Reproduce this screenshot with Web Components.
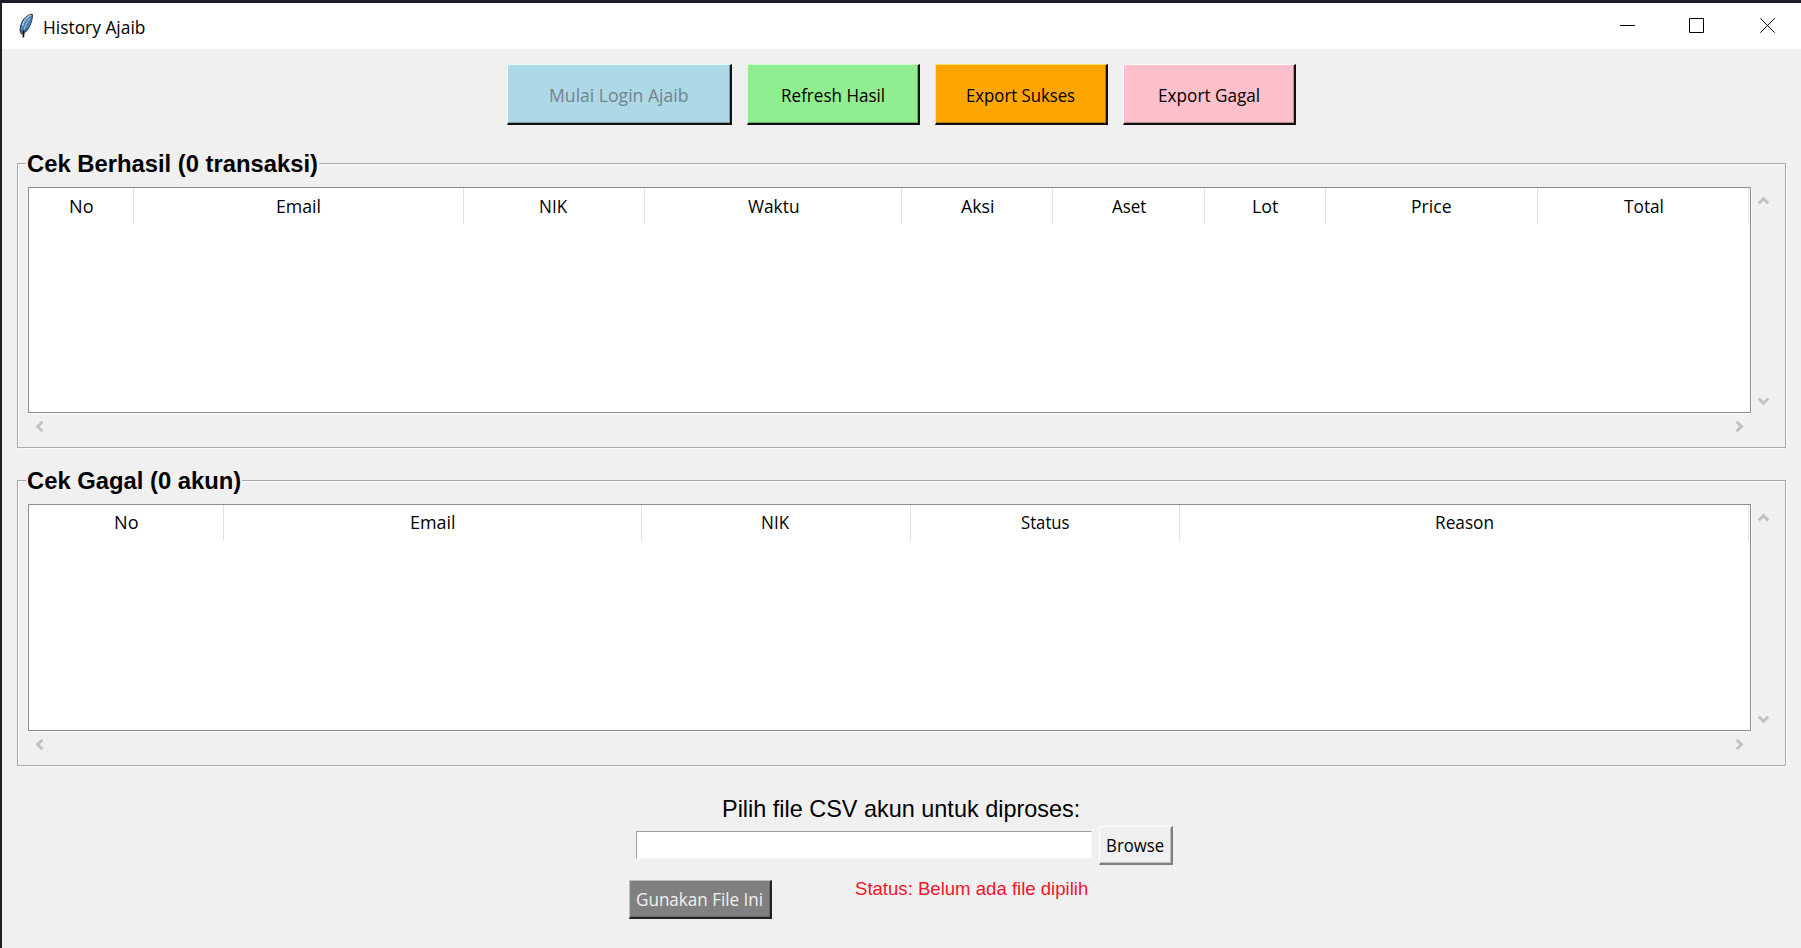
<!DOCTYPE html>
<html lang="id">
<head>
<meta charset="utf-8">
<title>History Ajaib</title>
<style>
html,body{margin:0;height:100%;overflow:hidden}
body{background:#1f1e26;font-family:"Open Sans","Noto Sans",sans-serif;font-size:18px;color:#000}
</style>
</head>
<body>
<history-app></history-app>
<script>
const define = (name, html, setup) => {
  const template = document.createElement('template');
  template.innerHTML = html;
  customElements.define(name, class extends HTMLElement {
    connectedCallback() {
      if (this.shadowRoot) return;
      this.attachShadow({ mode: 'open' }).append(template.content.cloneNode(true));
      if (setup) setup(this, this.shadowRoot);
    }
  });
};

/* Text run condensed to a given ink width */
const pen = document.createElement('canvas').getContext('2d');
define('fit-text', `
<style>
:host{display:flex;flex:none;height:24px;line-height:24px}
span{display:block;flex:none;white-space:nowrap;transform-origin:0 50%}
</style><span><slot></slot></span>`, (el, root) => {
  const w = parseFloat(el.getAttribute('w'));
  const cs = getComputedStyle(el);
  pen.font = `${cs.fontWeight} ${cs.fontSize} ${cs.fontFamily}`;
  const m = pen.measureText(el.textContent);
  const k = w / (m.actualBoundingBoxRight + m.actualBoundingBoxLeft);
  el.style.width = w + 'px';
  root.querySelector('span').style.transform = `translateX(${m.actualBoundingBoxLeft * k}px) scaleX(${k})`;
});

define('title-bar', `
<style>
:host{display:flex;height:46px;background:#fff;align-items:center;box-sizing:border-box;padding-left:16px;font-size:17.500px}
.feather{width:16px;height:26px;margin:0 9.7px 0 0;flex:none}
fit-text{margin-top:1px}
.buttons{display:flex;margin-left:auto;padding:0 26px 0 0}
.buttons svg{width:15px;height:15px;display:block;margin-top:-1px}
.buttons svg:nth-child(2){margin:-1px 56px 0 54px}
</style>
<svg class="feather" viewBox="0 0 16 26">
<path d="M14.3 1.2 C10 1 5 5.500 3.200 11 C1.800 15 2 19 3.300 21 C6 21 9.500 18 11.500 13.500 C13.500 9.500 14.800 5 14.300 1.200Z" fill="#4c80b8" stroke="#30353c" stroke-width="1"/>
<path d="M13 2.200 C9 3 5.500 8 4.500 13" fill="none" stroke="#a9bfd2" stroke-width="1.500"/>
<path d="M11.800 5 C8.500 9.500 6.500 14 5.600 19" fill="none" stroke="#9cc5ea" stroke-width="1"/>
<path d="M1.700 16.500 L3.500 19 M9.500 16 L7.300 17" stroke="#333" fill="none" stroke-width="1"/>
<path d="M5.800 17 L5.300 24.500" stroke="#111" stroke-width="1.700" fill="none"/>
</svg>
<fit-text w="100.700">History Ajaib</fit-text>
<div class="buttons">
<svg viewBox="0 0 15 15"><path d="M0 7.500H15" stroke="#000"/></svg>
<svg viewBox="0 0 15 15"><path d="M.5 .5H14.500V14.500H.5Z" stroke="#000" fill="none"/></svg>
<svg viewBox="0 0 15 15"><path d="M.3 .3L14.700 14.700M14.700 .3L.3 14.700" stroke="#000"/></svg>
</div>`);

/* Raised classic button */
define('tk-button', `
<style>
:host{display:flex;box-sizing:border-box;align-items:center;justify-content:center;flex:none;
background:var(--face);color:var(--ink,#000);border:solid;border-width:1px 2px 2px 1px;
border-color:var(--light) var(--dark,#111) var(--dark,#111) var(--light);
box-shadow:inset -1px -1px var(--shade)}
::slotted(fit-text){margin-top:var(--drop,2px)}
</style><slot></slot>`);

define('scroll-arrow', `
<style>
:host{display:block;width:11px;height:9px;flex:none}
:host([dir=down]){transform:rotate(180deg)}
:host([dir=left]){transform:rotate(-90deg)}
:host([dir=right]){transform:rotate(90deg)}
svg{display:block}
</style><svg width="11" height="9" viewBox="0 0 11 9"><path d="M.8 7.400L5.500 2.500L10.200 7.400" fill="none" stroke="#c1c1c1" stroke-width="2.900"/></svg>`);

define('data-grid', `
<style>
:host{display:grid;grid-template:var(--h) 19px / 1723px 25px}
.view{box-sizing:border-box;background:#fff;border:1px solid #8c8e94;box-shadow:0 1px #fafafa,1px 0 #f8f8f8}
.head{display:flex;height:36px}
.head div{box-sizing:border-box;border-right:1px solid #e2e2e2;display:flex;justify-content:center;flex:none;padding-top:var(--top,6px)}
.v{display:flex;flex-direction:column;justify-content:space-between;align-items:center;padding:9px 0 7px}
.h{display:flex;justify-content:space-between;align-items:center;padding:7px 6px 0}
</style>
<div class="view"><div class="head"></div></div>
<div class="v"><scroll-arrow dir="up"></scroll-arrow><scroll-arrow dir="down"></scroll-arrow></div>
<div class="h"><scroll-arrow dir="left"></scroll-arrow><scroll-arrow dir="right"></scroll-arrow></div>`, (el, root) => {
  const head = root.querySelector('.head');
  for (const col of el.getAttribute('columns').split(',')) {
    const [label, width, ink] = col.split(':');
    const cell = document.createElement('div');
    cell.style.width = width + 'px';
    cell.innerHTML = `<fit-text w="${ink}">${label}</fit-text>`;
    head.append(cell);
  }
});

define('label-frame', `
<style>
:host{display:block;box-sizing:border-box;width:1769px;border:1px solid #a8a8a8;box-shadow:1px 1px #fafafa,inset 1px 1px #fafafa;padding-left:10px}
.legend{display:flex;width:max-content;height:24px;margin:-12px 0 11px -2px;padding:0 2px 0 1px;background:#f0f0f0;font:bold 24px "Liberation Sans",Arial,sans-serif}
</style>
<div class="legend"><slot name="legend"></slot></div><slot></slot>`);

define('file-picker', `
<style>
:host{display:flex;flex-direction:column;align-items:flex-start;width:546px;font-family:"Liberation Sans",Arial,sans-serif}
.prompt{font-size:24px;margin-left:93.500px}
.row{display:flex;align-items:flex-start;margin:5px 0 0 7px;gap:7px}
input{box-sizing:border-box;width:456px;height:28px;margin:5px 0 0;padding:0 4px;border:solid;border-width:1px;border-color:#a0a0a0 #fafafa #fafafa #a0a0a0;background:#fff;outline:0}
tk-button{font:18px "Open Sans","Noto Sans",sans-serif;height:39px;--drop:0}
.browse{width:74px;--face:#f0f0f0;--light:#fff;--dark:#7f7f7f;--shade:#c0c0c0}
.foot{display:flex;margin-top:15px;align-items:flex-start}
.use{width:143px;--face:#808080;--ink:#f0f0f0;--light:#c0c0c0;--dark:#222;--shade:#666}
.status{color:#f5142a;font-size:19px;margin:-3px 0 0 83px}
</style>
<fit-text class="prompt" w="355.600">Pilih file CSV akun untuk diproses:</fit-text>
<div class="row"><input aria-label="File CSV"><tk-button class="browse"><fit-text w="57">Browse</fit-text></tk-button></div>
<div class="foot"><tk-button class="use"><fit-text w="125.600">Gunakan File Ini</fit-text></tk-button><fit-text class="status" w="232.700">Status: Belum ada file dipilih</fit-text></div>`);

define('history-app', `
<style>
:host{display:flex;flex-direction:column;box-sizing:border-box;width:1799px;height:945px;margin:3px 0 0 2px;background:#f0f0f0}
.tools{display:flex;justify-content:center;gap:14.700px;height:61px;margin:15px 0 38px;padding-right:0}
.tools tk-button{width:173px;height:61px}
.tools .login{width:225px;--face:#add8e6;--ink:#75838b;--light:#e8ffff;--shade:#7d9ca6}
.refresh{--face:#90ee90;--light:#d8ffd8;--shade:#68ab68}
.good{--face:#ffa500;--light:#ffe060;--shade:#b87700}
.bad{--face:#ffc0cb;--light:#fff;--shade:#b88a92}
label-frame{margin-left:15px}
.one{height:285px;margin-bottom:32px}
.two{height:286px;margin-bottom:31px}
file-picker{margin-left:627px}
</style>
<title-bar></title-bar>
<div class="tools">
<tk-button class="login"><fit-text w="138.500">Mulai Login Ajaib</fit-text></tk-button>
<tk-button class="refresh"><fit-text w="101.700">Refresh Hasil</fit-text></tk-button>
<tk-button class="good"><fit-text w="107.500">Export Sukses</fit-text></tk-button>
<tk-button class="bad"><fit-text w="99.700">Export Gagal</fit-text></tk-button>
</div>
<label-frame class="one"><fit-text slot="legend" w="290">Cek Berhasil (0 transaksi)</fit-text>
<data-grid style="--h:226px" columns="No:105:22.700,Email:330:42.500,NIK:181:28,Waktu:257:50.500,Aksi:151:33,Aset:152:34,Lot:121:25,Price:212:39.500,Total:211:38.500"></data-grid></label-frame>
<label-frame class="two"><fit-text slot="legend" w="213.300">Cek Gagal (0 akun)</fit-text>
<data-grid style="--h:227px;--top:5px" columns="No:195:22.700,Email:418:43,NIK:269:28,Status:269:48,Reason:569:57"></data-grid></label-frame>
<file-picker></file-picker>`);
</script>
</body>
</html>
